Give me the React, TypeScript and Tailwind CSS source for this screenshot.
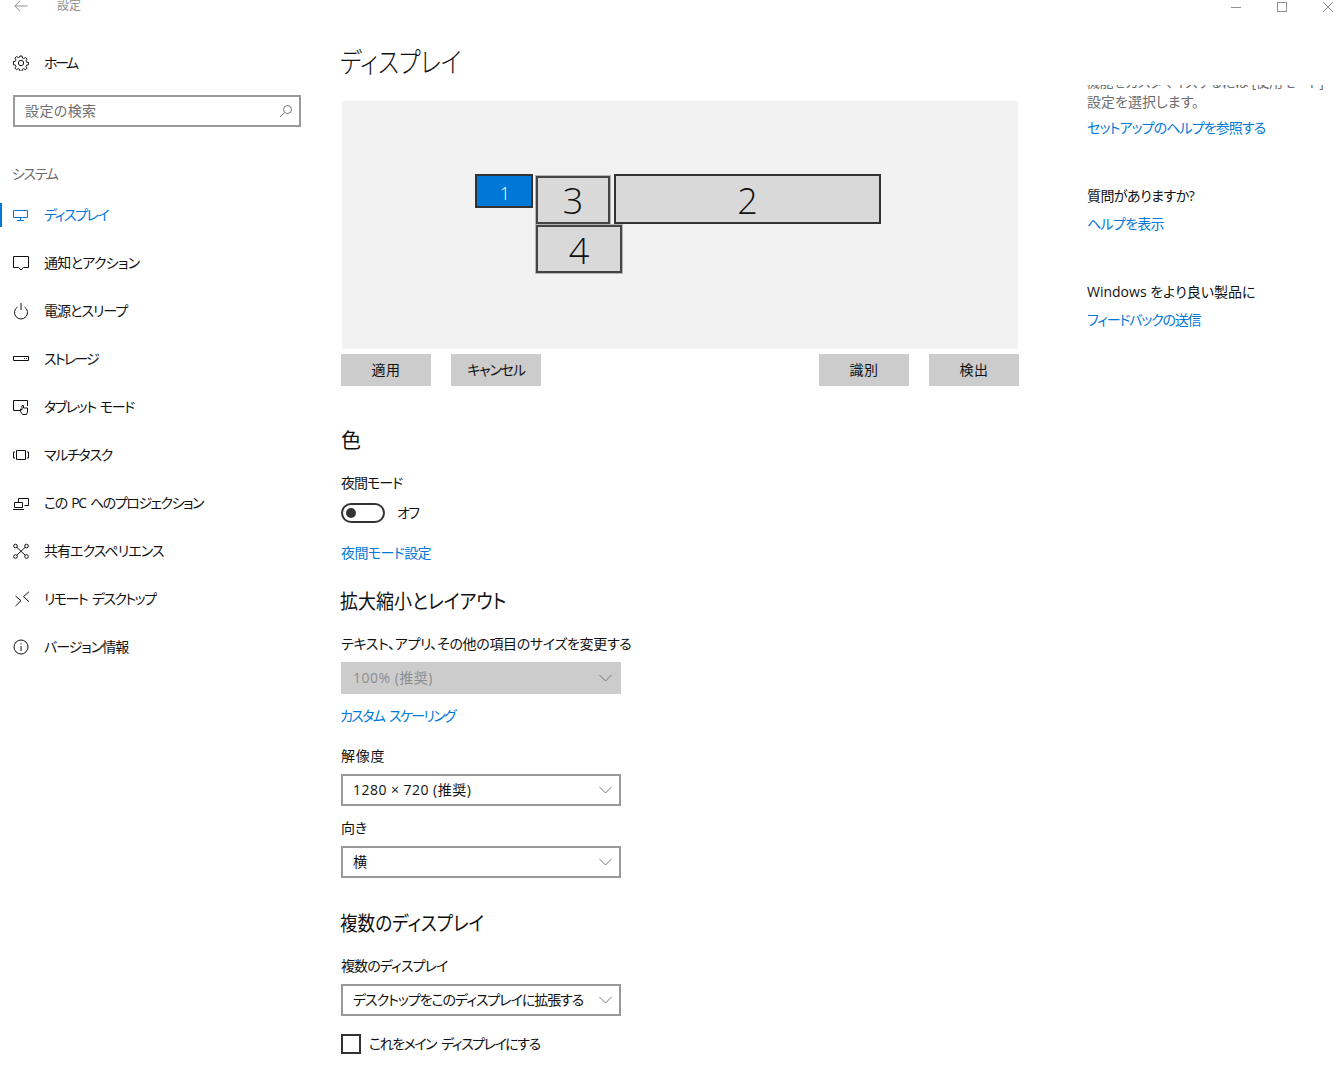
import type { ReactNode } from 'react';

const navItems: { label: string; tracking: string; icon: ReactNode; active?: boolean }[] = [
  {
    label: 'ディスプレイ',
    tracking: 'tracking-[-1.5px]',
    active: true,
    icon: <path d="M1.5 4.5h14v7h-14zM8.500 11.500v2.500M5 14.500h7" />,
  },
  {
    label: '通知とアクション',
    tracking: 'tracking-[-0.7px]',
    icon: <path d="M1.500 2.500h15v11h-5L9 16 6.500 13.500h-5z" />,
  },
  {
    label: '電源とスリープ',
    tracking: 'tracking-[-1px]',
    icon: <path d="M9 1v7M5.500 5a6.500 6.500 0 1 0 7 0" />,
  },
  {
    label: 'ストレージ',
    tracking: 'tracking-[-1.8px]',
    icon: <path d="M1.500 6.500h15v4h-15zM12 8.500h.8M14 8.500h.8" />,
  },
  {
    label: 'タブレット モード',
    tracking: 'tracking-[-1.4px] [word-spacing:2px]',
    icon: <path d="M9 12.500H1.500v-10h14V8M10.500 16.500l-2-3V11l1.500 1V7.500h1.500V10h4v4l-1 2.500z" />,
  },
  {
    label: 'マルチタスク',
    tracking: 'tracking-[-1.3px]',
    icon: <path d="M4.500 4.500h9v9h-9zM3 6H1.500v6H3M15 6h1.500v6H15" />,
  },
  {
    label: 'この PC へのプロジェクション',
    tracking: 'tracking-[-1.5px] [word-spacing:2.500px]',
    icon: <path d="M6.500 8V4.500h10v7h-4M2.500 8.500h8v5h-8zM1 15.500h11" />,
  },
  {
    label: '共有エクスペリエンス',
    tracking: 'tracking-[-0.95px]',
    icon: (
      <>
        <circle cx="3.500" cy="4" r="1.800" />
        <circle cx="14.500" cy="4" r="1.800" />
        <circle cx="3.500" cy="14.500" r="1.800" />
        <circle cx="14.500" cy="14.500" r="1.800" />
        <path d="M5 5.500l8 7.500M13 5.500l-8 7.500" />
      </>
    ),
  },
  {
    label: 'リモート デスクトップ',
    tracking: '-ml-px tracking-[-1.6px] [word-spacing:3px]',
    icon: <path d="M3.500 6l5.500 4.700L3.500 16M17 1.700l-5.500 5 5.500 5" />,
  },
  {
    label: 'バージョン情報',
    tracking: 'tracking-[-1px]',
    icon: (
      <>
        <circle cx="9" cy="9" r="7" />
        <path d="M9 8v5M9 5.200v1.200" />
      </>
    ),
  },
];

function NavIcon({ children }: { children: ReactNode }) {
  return (
    <svg width="18" height="18" viewBox="0 0 18 18" fill="none" stroke="currentColor" strokeWidth="1">
      {children}
    </svg>
  );
}

function Chevron() {
  return (
    <svg width="13" height="8" viewBox="0 0 13 8" fill="none" stroke="#767676" strokeWidth="1">
      <path d="M.5 1l6 6 6-6" />
    </svg>
  );
}

function Select({ value, disabled, tracking }: { value: string; disabled?: boolean; tracking?: string }) {
  return (
    <div
      className={
        disabled
          ? 'w-[280px] h-8 pl-3 pr-[9px] flex items-center justify-between bg-[#cccccc] text-[#8c8c8c]'
          : 'w-[280px] h-8 pl-[10px] pr-[7px] flex items-center justify-between border-2 border-[#999999] text-[#111111]'
      }
    >
      <span className={`whitespace-nowrap ${tracking ?? ''}`}>{value}</span>
      <Chevron />
    </div>
  );
}

function ActionButton({ label, tracking }: { label: string; tracking?: string }) {
  return <button className={`w-[90px] h-8 bg-[#cccccc] text-[#111111] ${tracking ?? ''}`}>{label}</button>;
}

export default function App() {
  return (
    <div className="w-[1337px] h-[1067px] overflow-hidden bg-white text-[14px] leading-5 text-[#111111] font-['Open_Sans','Noto_Sans_CJK_JP',sans-serif] [font-feature-settings:'palt']">
      {/* Title bar */}
      <div className="h-[14px] flex items-start text-[#8f8f8f] overflow-hidden">
        <svg width="14" height="12" viewBox="0 0 14 12" fill="none" stroke="currentColor" strokeWidth="1" className="ml-[14px]">
          <path d="M13.500 6H1M6 .8L.8 6 6 11.200" />
        </svg>
        <span className="ml-[29px] -mt-[4px] text-[12px]">設定</span>
        <div className="ml-auto flex">
          <div className="w-[10px] h-px bg-current mt-[7px] mr-[36px]" />
          <div className="w-[10px] h-[10px] border border-current mt-[2px] mr-[36px]" />
          <svg width="10" height="10" viewBox="0 0 10 10" stroke="currentColor" strokeWidth="1" className="mt-[2px] mr-[4px]">
            <path d="M0 0l10 10M10 0L0 10" />
          </svg>
        </div>
      </div>

      <div className="flex">
        {/* Sidebar */}
        <aside className="w-[320px] shrink-0">
          <div className="mt-[25px] h-12 pl-[13px] flex items-center">
            <svg width="16" height="16" viewBox="0 0 24 24" fill="none" stroke="currentColor" strokeWidth="1.500">
              <path d="M10.300 1.500h3.400l.5 3 2 .9 2.600-1.700 2.400 2.400-1.700 2.600.9 2 3 .5v3.400l-3 .5-.9 2 1.700 2.600-2.400 2.400-2.600-1.700-2 .9-.5 3h-3.400l-.5-3-2-.9-2.600 1.700-2.400-2.400 1.700-2.600-.9-2-3-.5V9.800l3-.5.9-2-1.700-2.600 2.400-2.400 2.600 1.700 2-.9z" />
              <circle cx="12" cy="12" r="4" />
            </svg>
            <span className="ml-[15px] tracking-[-2.5px]">ホーム</span>
          </div>
          <div className="mt-2 ml-[13px] w-[288px] h-8 border-2 border-[#999999] pl-[10px] pr-[6px] flex items-center justify-between text-[#6d6d6d]">
            <span className="tracking-[0.4px]">設定の検索</span>
            <svg width="14" height="14" viewBox="0 0 14 14" fill="none" stroke="#767676" strokeWidth="1">
              <circle cx="8.500" cy="5.500" r="4" />
              <path d="M5.500 8.500L1 13" />
            </svg>
          </div>
          <div className="mt-[37px] pl-3 h-5 text-[#6d6d6d] tracking-[-1.4px]">システム</div>
          <nav className="mt-[7px]">
            {navItems.map((item) => (
              <div key={item.label} className={item.active ? 'h-12 pl-3 flex items-center text-[#0078d7]' : 'h-12 pl-3 flex items-center'}>
                {item.active && <div className="w-[2px] h-6 bg-[#0078d7] -ml-3 mr-[10px]" />}
                <NavIcon>{item.icon}</NavIcon>
                <span className={`ml-[14px] ${item.tracking}`}>{item.label}</span>
              </div>
            ))}
          </nav>
        </aside>

        {/* Main */}
        <main className="w-[678px] ml-[21px] shrink-0">
          <h1 className="mt-[28px] h-10 leading-10 text-[28px] font-light -ml-[1px] origin-left scale-x-[0.83]">ディスプレイ</h1>
          <div className="mt-[19px] mx-px h-[248px] bg-[#f2f2f2] relative">
            <div className="absolute left-[133px] top-[73px] w-[58px] h-[34px] bg-[#0078d7] border-2 border-[#333333] flex items-center justify-center pt-[3px] pl-[2px] text-white text-[18px] font-light">1</div>
            <div className="absolute left-[194px] top-[75px] w-[74px] h-[48px] bg-[#d9d9d9] border-2 border-[#444444] outline outline-1 outline-[#b5b5b5] flex items-center justify-center pt-[2px] text-[36px] font-light">3</div>
            <div className="absolute left-[272px] top-[73px] w-[267px] h-[50px] bg-[#d9d9d9] border-2 border-[#333333] flex items-center justify-center pt-[3px] text-[36px] font-light">2</div>
            <div className="absolute left-[194px] top-[124px] w-[86px] h-[48px] bg-[#d9d9d9] border-2 border-[#444444] outline outline-1 outline-[#b5b5b5] flex items-center justify-center pt-[4px] text-[36px] font-light">4</div>
          </div>
          <div className="mt-[5px] flex gap-5">
            <ActionButton label="適用" tracking="tracking-[0.5px]" />
            <ActionButton label="キャンセル" tracking="tracking-[-1.2px]" />
            <div className="ml-auto flex gap-5">
              <ActionButton label="識別" tracking="tracking-[0.5px]" />
              <ActionButton label="検出" tracking="tracking-[0.5px]" />
            </div>
          </div>

          <h2 className="mt-10 h-7 leading-7 pt-px text-[20px]">色</h2>
          <div className="mt-[19px] tracking-[-1px]">夜間モード</div>
          <div className="mt-[10px] flex items-center">
            <div className="w-11 h-5 rounded-full border-2 border-[#333333] flex items-center pl-[3px]">
              <div className="w-[10px] h-[10px] rounded-full bg-[#333333]" />
            </div>
            <span className="ml-3 tracking-[-1.5px]">オフ</span>
          </div>
          <div className="mt-5 text-[#0078d7] tracking-[-0.6px]">夜間モード設定</div>

          <h2 className="mt-6 h-7 leading-7 pt-px text-[20px] -ml-[1px] origin-left scale-x-[0.9]">拡大縮小とレイアウト</h2>
          <div className="mt-[19px] tracking-[-0.33px]">テキスト、アプリ、その他の項目のサイズを変更する</div>
          <div className="mt-2"><Select value="100% (推奨)" disabled tracking="tracking-[0.5px]" /></div>
          <div className="mt-3 text-[#0078d7] -ml-[1px] tracking-[-1.7px] [word-spacing:3px]">カスタム スケーリング</div>
          <div className="mt-5 tracking-[0.7px]">解像度</div>
          <div className="mt-2"><Select value="1280 × 720 (推奨)" tracking="tracking-[0.47px]" /></div>
          <div className="mt-3">向き</div>
          <div className="mt-2"><Select value="横" /></div>

          <h2 className="mt-[31px] h-7 leading-7 pt-px text-[20px] -ml-[1px] origin-left scale-x-[0.88]">複数のディスプレイ</h2>
          <div className="mt-[19px] tracking-[-0.9px]">複数のディスプレイ</div>
          <div className="mt-2"><Select value="デスクトップをこのディスプレイに拡張する" tracking="tracking-[-1.05px]" /></div>
          <div className="mt-[18px] flex items-center">
            <div className="w-5 h-5 border-2 border-[#333333]" />
            <span className="ml-2 tracking-[-1.5px] [word-spacing:3px]">これをメイン ディスプレイにする</span>
          </div>
        </main>

        {/* Right help column */}
        <div className="ml-[68px] w-[240px] shrink-0 mt-[71px] overflow-hidden h-[300px]">
          <div className="-mt-[13px] -ml-px text-[#6d6d6d] whitespace-nowrap tracking-[-0.5px]">機能をカスタマイズするには [使用モード] の</div>
          <div className="text-[#6d6d6d]">設定を選択します。</div>
          <div className="mt-[6px] text-[#0078d7] tracking-[-0.9px]">セットアップのヘルプを参照する</div>
          <div className="mt-[48px] tracking-[-0.55px]">質問がありますか?</div>
          <div className="mt-2 text-[#0078d7] tracking-[-0.7px]">ヘルプを表示</div>
          <div className="mt-[48px]">Windows をより良い製品に</div>
          <div className="mt-2 text-[#0078d7] tracking-[-1.2px]">フィードバックの送信</div>
        </div>
      </div>
    </div>
  );
}
